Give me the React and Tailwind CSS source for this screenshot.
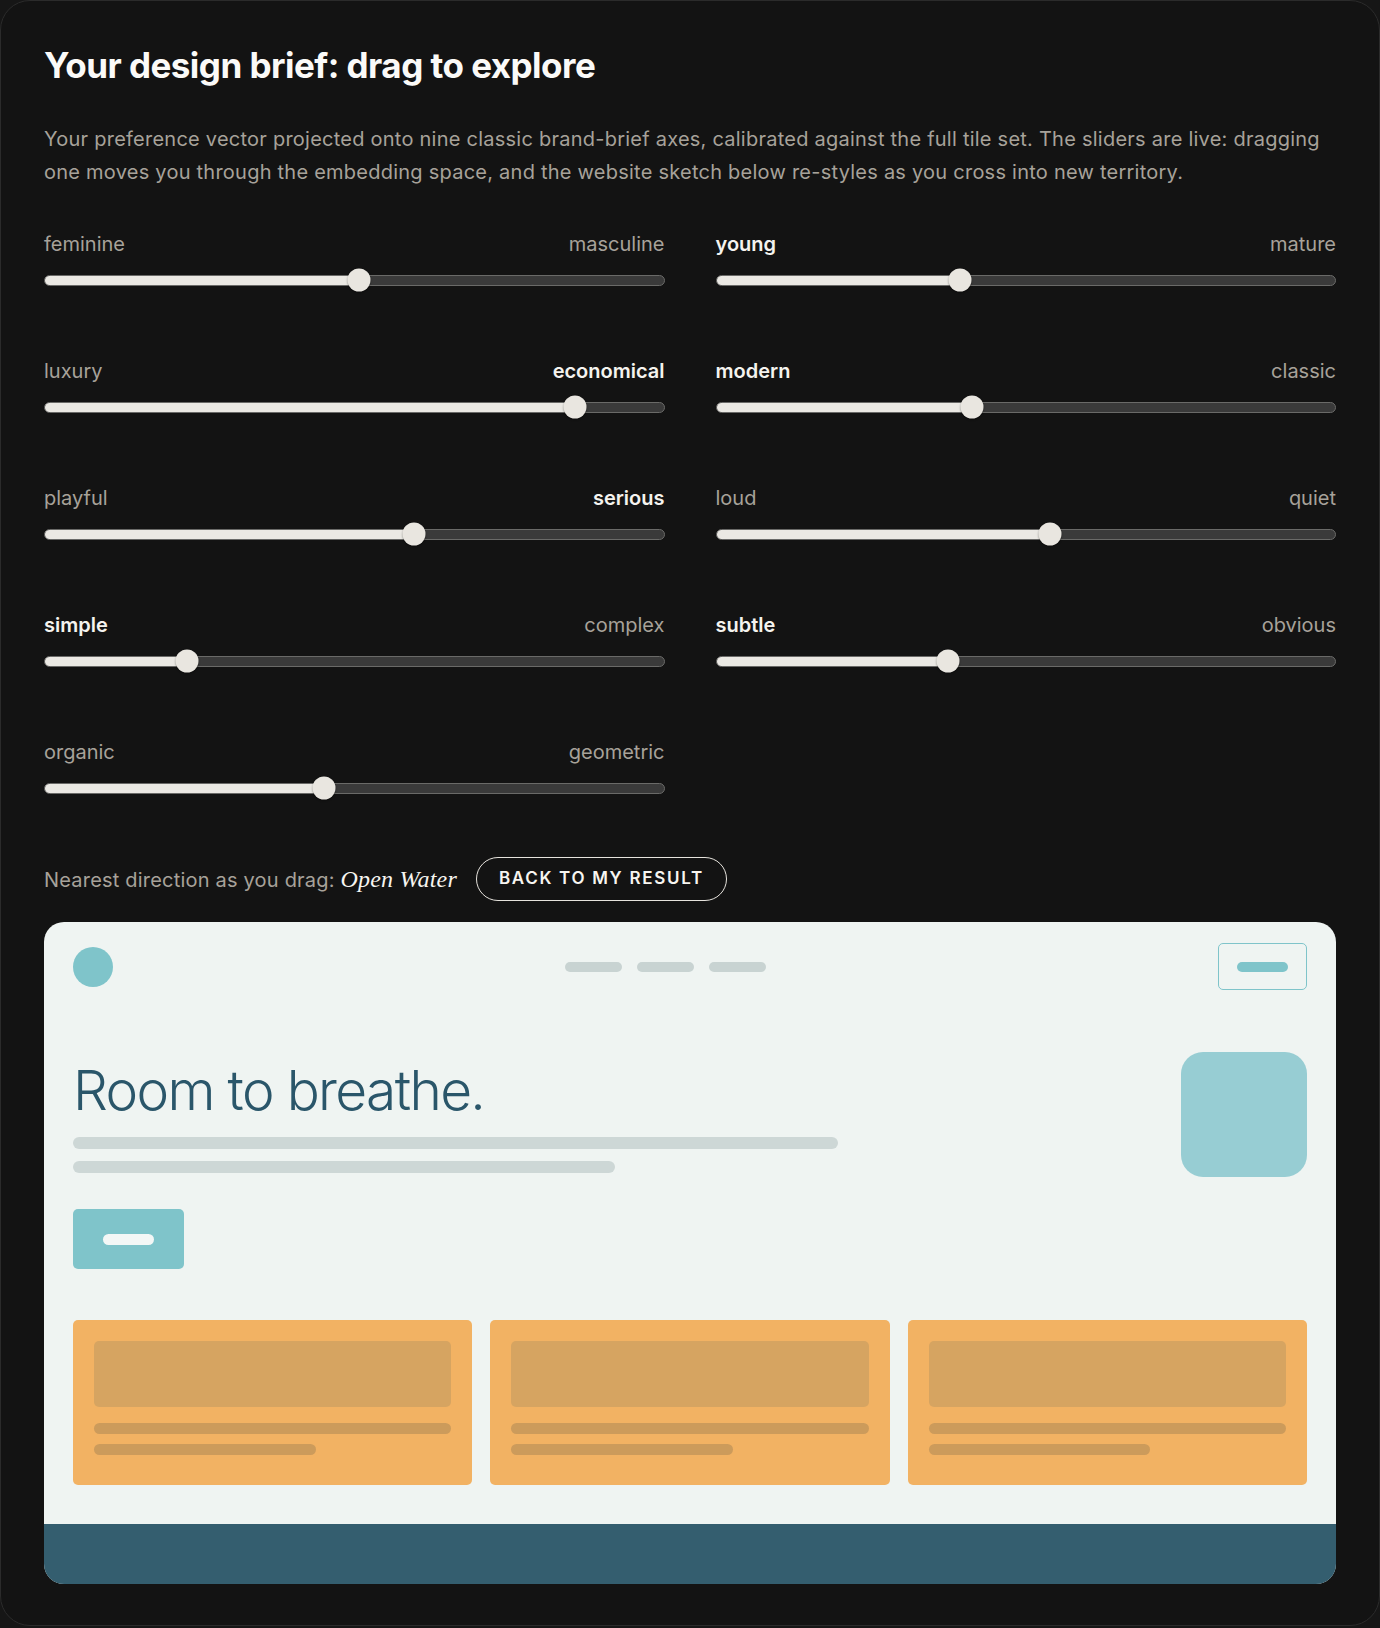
const axes = [
  { left: 'feminine', right: 'masculine', value: 0.508 },
  { left: 'young', right: 'mature', value: 0.394, bold: 'left' },
  { left: 'luxury', right: 'economical', value: 0.855, bold: 'right' },
  { left: 'modern', right: 'classic', value: 0.414, bold: 'left' },
  { left: 'playful', right: 'serious', value: 0.597, bold: 'right' },
  { left: 'loud', right: 'quiet', value: 0.539 },
  { left: 'simple', right: 'complex', value: 0.23, bold: 'left' },
  { left: 'subtle', right: 'obvious', value: 0.374, bold: 'left' },
  { left: 'organic', right: 'geometric', value: 0.452 },
];

function AxisSlider({ left, right, value, bold }) {
  const pct = `${value * 100}%`;
  return (
    <div>
      <div className="flex justify-between text-[20px] leading-[28px]">
        <span className={bold === 'left' ? 'font-semibold text-[#f5f3ef]' : 'text-[#a7a29a]'}>{left}</span>
        <span className={bold === 'right' ? 'font-semibold text-[#f5f3ef]' : 'text-[#a7a29a]'}>{right}</span>
      </div>
      <div className="relative mt-[10px] flex h-[24px] items-center">
        <div className="h-[11px] w-full overflow-hidden rounded-full border border-[#6a6a68] bg-[#3a3a3a]">
          <div className="h-full bg-[#ebe9e4]" style={{ width: pct }} />
        </div>
        {/* thumb */}
        <div
          className="absolute top-1/2 h-[23px] w-[23px] -translate-x-1/2 -translate-y-1/2 rounded-full bg-[#e9e6e0] shadow-[0_1px_2px_rgba(0,0,0,0.4)]"
          style={{ left: pct }}
        />
      </div>
    </div>
  );
}

function SiteSketch() {
  return (
    <div className="mt-[21px] overflow-hidden rounded-[20px] bg-[#eff4f2]">
      {/* nav */}
      <div className="flex items-center justify-between px-[29px] pt-[21px]">
        <div className="h-[40px] w-[40px] rounded-full bg-[#7fc4ca]" />
        <div className="flex gap-[15px]">
          <div className="h-[10px] w-[57px] rounded-full bg-[#c8d3d2]" />
          <div className="h-[10px] w-[57px] rounded-full bg-[#c8d3d2]" />
          <div className="h-[10px] w-[57px] rounded-full bg-[#c8d3d2]" />
        </div>
        <div className="flex h-[47px] w-[89px] items-center justify-center rounded-[5px] border-[1.5px] border-[#7fc4ca]">
          <div className="h-[10px] w-[51px] rounded-full bg-[#7fc4ca]" />
        </div>
      </div>

      {/* hero */}
      <div className="flex items-start justify-between px-[29px] pt-[62px]">
        <div className="pt-[11px]">
          <h3 className="text-[55px] font-light leading-[55px] tracking-[-0.03em] text-[#2a566a]">Room to breathe.</h3>
          <div className="mt-[19px] h-[12px] w-[765px] rounded-full bg-[#cdd7d6]" />
          <div className="mt-[12px] h-[12px] w-[542px] rounded-full bg-[#cdd7d6]" />
          <div className="mt-[36px] flex h-[60px] w-[111px] items-center justify-center rounded-[5px] bg-[#7fc4ca]">
            <div className="h-[11px] w-[51px] rounded-full bg-[#f3f7f6]" />
          </div>
        </div>
        <div className="h-[125px] w-[126px] rounded-[22px] bg-[#97cdd3]" />
      </div>

      {/* cards */}
      <div className="grid grid-cols-3 gap-[18px] px-[29px] pt-[51px] pb-[39px]">
        {[0, 1, 2].map((i) => (
          <div key={i} className="rounded-[5px] bg-[#f2b263] px-[21px] pt-[21px] pb-[30px]">
            <div className="h-[66px] rounded-[5px] bg-[#d6a461]" />
            <div className="mt-[16px] h-[11px] rounded-full bg-[#cc9b5b]" />
            <div className="mt-[10px] h-[11px] w-[62%] rounded-full bg-[#cc9b5b]" />
          </div>
        ))}
      </div>

      <div className="h-[60px] bg-[#345e6f]" />
    </div>
  );
}

export default function App() {
  return (
    <div className="min-h-[1628px] bg-[#161616] font-['Inter',sans-serif]">
      <div className="rounded-[30px] border border-[#2b2b2b] bg-[#131313] px-[43px] pt-[44px] pb-[41px]">
        <h2 className="text-[35px] font-bold leading-[40px] tracking-[-0.015em] text-[#fbfaf8]">
          Your design brief: drag to explore
        </h2>
        <p className="mt-[38px] text-[20px] leading-[33px] tracking-[0.012em] text-[#a7a29a]">
          Your preference vector projected onto nine classic brand-brief axes, calibrated against the full tile set. The sliders are live: dragging one moves you through the embedding space, and the website sketch below re-styles as you cross into new territory.
        </p>

        <div className="mt-[41px] grid grid-cols-2 gap-x-[51px] gap-y-[65px]">
          {axes.map((a) => (
            <AxisSlider key={a.left} {...a} />
          ))}
        </div>

        <div className="mt-[57px] flex items-center gap-[19px]">
          <p className="text-[20px] tracking-[0.01em] text-[#a7a29a]">
            Nearest direction as you drag:{' '}
            <span className="font-['Liberation_Serif',serif] text-[24px] italic text-[#f7f5f0]">Open Water</span>
          </p>
          <button className="h-[44px] rounded-full border-[1.5px] border-[#e6e3dd] px-[22px] text-[17px] font-semibold uppercase tracking-[0.1em] text-[#f7f5f0]">
            Back to my result
          </button>
        </div>

        <SiteSketch />
      </div>
    </div>
  );
}
